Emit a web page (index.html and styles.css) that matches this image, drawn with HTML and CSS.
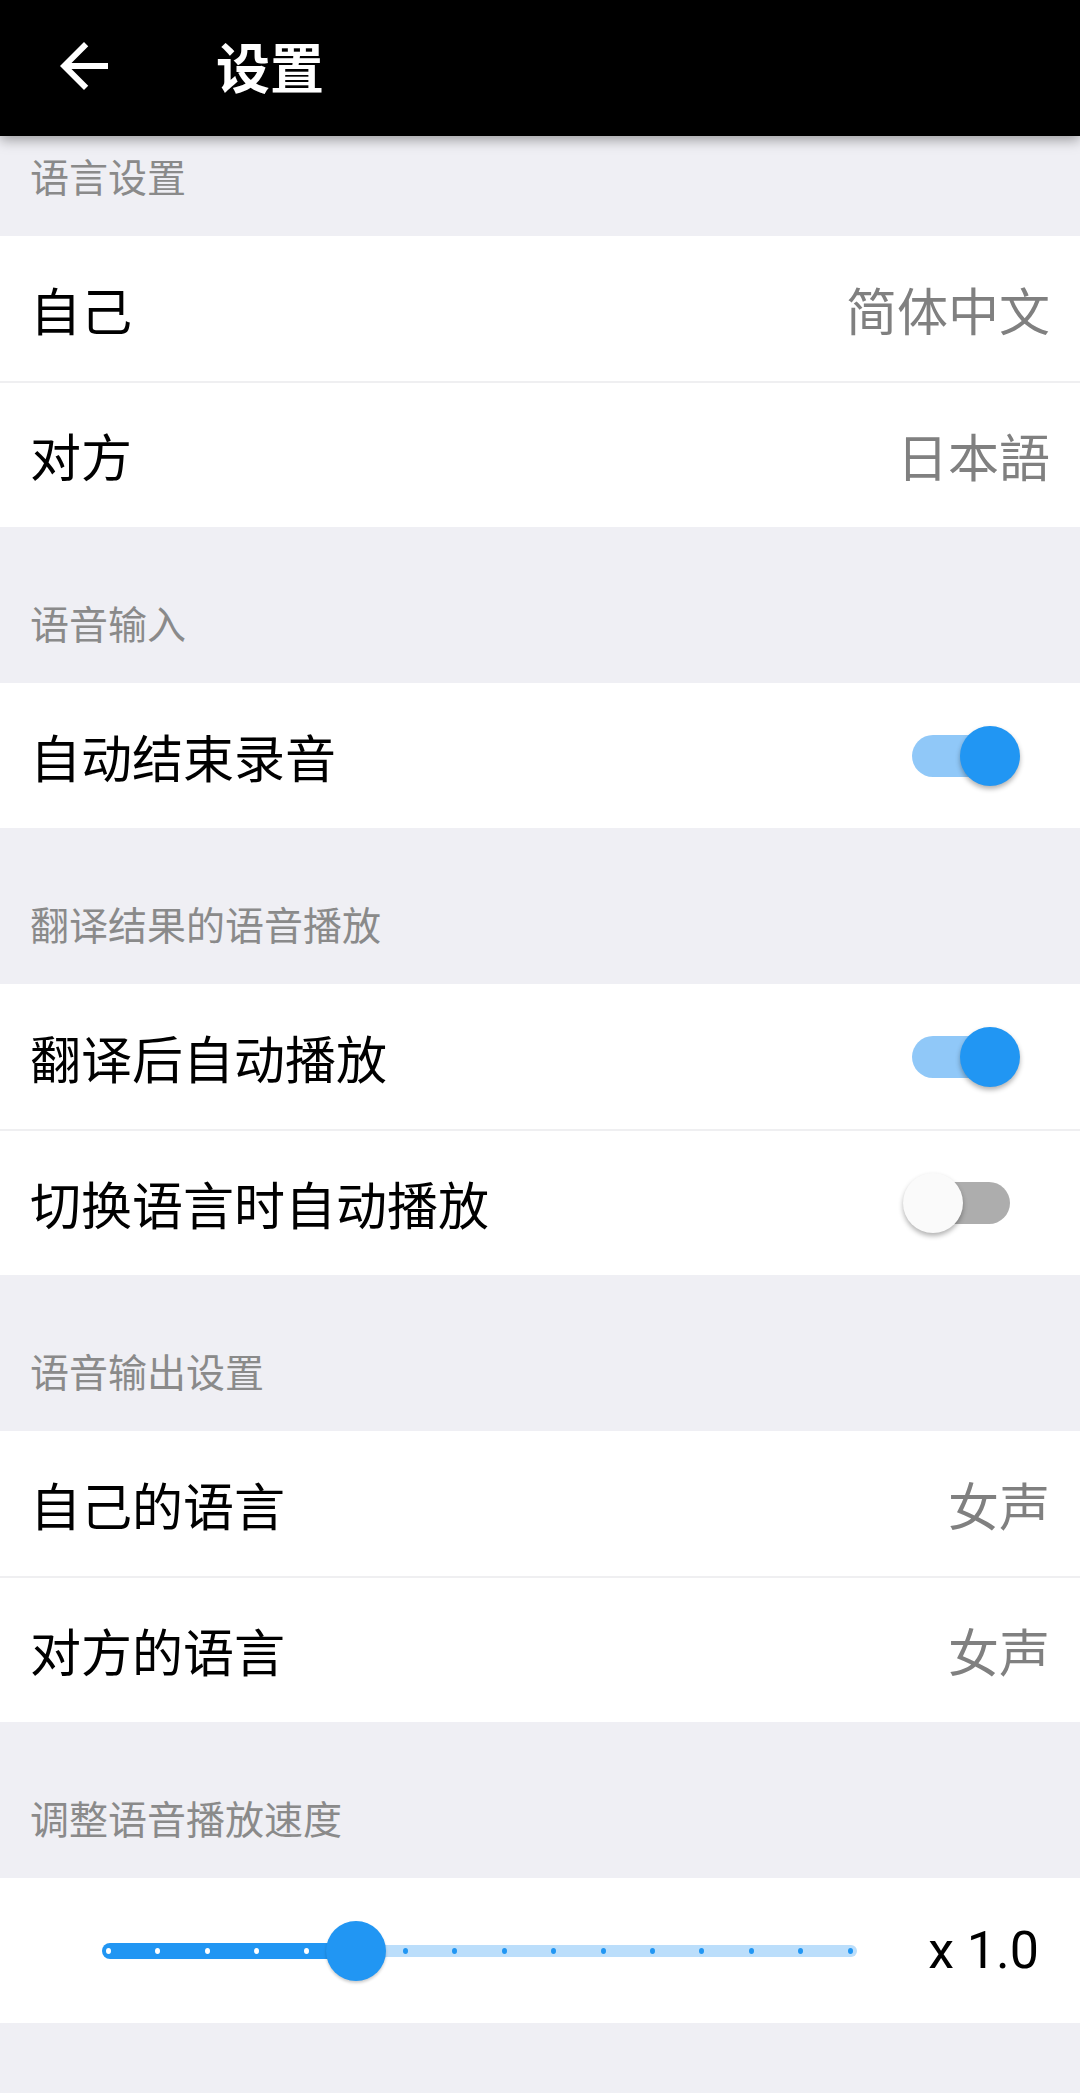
FILE: index.html
```html
<!DOCTYPE html>
<html lang="zh">
<head>
    <meta charset="UTF-8">
    <meta name="viewport" content="width=device-width, initial-scale=1.0">
    <title>设置</title>
    <link rel="stylesheet" href="styles.css">
</head>
<body>
    <div class="topbar">
        <svg class="back" viewBox="0 0 24 24" width="72" height="72">
            <path d="M20 11H7.83l5.59-5.59L12 4l-8 8 8 8 1.41-1.41L7.83 13H20v-2z" fill="#fff"/>
        </svg>
        <h1>设置</h1>
    </div>

    <div class="section first">
        <div class="section-title">语言设置</div>
        <div class="row">
            <span class="label">自己</span>
            <span class="value">简体中文</span>
        </div>
        <div class="row">
            <span class="label">对方</span>
            <span class="value">日本語</span>
        </div>
    </div>

    <div class="section">
        <div class="section-title">语音输入</div>
        <div class="row">
            <span class="label">自动结束录音</span>
            <div class="switch on"><div class="switch-track"></div><div class="switch-thumb"></div></div>
        </div>
    </div>

    <div class="section">
        <div class="section-title">翻译结果的语音播放</div>
        <div class="row">
            <span class="label">翻译后自动播放</span>
            <div class="switch on"><div class="switch-track"></div><div class="switch-thumb"></div></div>
        </div>
        <div class="row">
            <span class="label">切换语言时自动播放</span>
            <div class="switch"><div class="switch-track"></div><div class="switch-thumb"></div></div>
        </div>
    </div>

    <div class="section">
        <div class="section-title">语音输出设置</div>
        <div class="row">
            <span class="label">自己的语言</span>
            <span class="value">女声</span>
        </div>
        <div class="row">
            <span class="label">对方的语言</span>
            <span class="value">女声</span>
        </div>
    </div>

    <div class="section">
        <div class="section-title">调整语音播放速度</div>
        <div class="row slider-row">
            <div class="slider">
                <div class="track-active" style="width:254px"></div>
                <div class="track-rest"></div>
                <div class="ticks">
                    <span class="tick done"></span><span class="tick done"></span><span class="tick done"></span>
                    <span class="tick done"></span><span class="tick done"></span><span class="tick done"></span>
                    <span class="tick"></span><span class="tick"></span><span class="tick"></span>
                    <span class="tick"></span><span class="tick"></span><span class="tick"></span>
                    <span class="tick"></span><span class="tick"></span><span class="tick"></span>
                    <span class="tick"></span>
                </div>
                <div class="slider-thumb" style="left:224px"></div>
            </div>
            <span class="speed">x 1.0</span>
        </div>
    </div>
</body>
</html>
```

FILE: styles.css
```css
*{
    margin:0;
    padding:0;
    box-sizing:border-box;
}
body{
    background:#efeff4;
    font-family:"Noto Sans CJK SC","Noto Sans",sans-serif;
    width:1080px;
}
.topbar{
    position:relative;
    z-index:2;
    height:136px;
    background:#000;
    display:flex;
    align-items:center;
    padding-left:48px;
    padding-bottom:4px;
    box-shadow:0 4px 12px rgba(0,0,0,.35);
}
.topbar h1{
    color:#fff;
    font-size:54px;
    font-weight:700;
    margin-left:96px;
    line-height:1;
}
.section{
    margin-top:56px;
}
.section.first{
    margin-top:0;
}
.section-title{
    height:100px;
    padding:18px 0 0 30px;
    font-size:39px;
    line-height:42px;
    color:#8a8a8a;
}
.row{
    height:145px;
    background:#fff;
    display:flex;
    align-items:center;
    justify-content:space-between;
    padding:0 30px 0 30px;
}
.row + .row{
    height:146px;
    border-top:2px solid #efeff1;
}
.label{
    font-size:51px;
    color:#000;
}
.value{
    font-size:51px;
    color:#808080;
}
.switch{
    position:relative;
    width:117px;
    height:60px;
    margin-right:30px;
    display:flex;
    align-items:center;
}
.switch-track{
    margin-left:9px;
    width:98px;
    height:42px;
    border-radius:21px;
    background:#adadad;
}
.switch-thumb{
    position:absolute;
    top:0;
    left:0;
    width:60px;
    height:60px;
    border-radius:50%;
    background:#fafafa;
    box-shadow:0 3px 5px rgba(0,0,0,.3);
}
.switch.on .switch-track{
    background:#90c8f8;
}
.switch.on .switch-thumb{
    left:57px;
    background:#2196f3;
}
.slider-row{
    padding-left:102px;
    padding-right:41px;
}
.slider{
    position:relative;
    width:755px;
    height:16px;
    display:flex;
    align-items:center;
}
.track-active{
    height:16px;
    background:#2196f3;
    border-radius:8px 0 0 8px;
}
.track-rest{
    flex:1;
    height:12px;
    background:#bbdefb;
    border-radius:0 6px 6px 0;
}
.ticks{
    position:absolute;
    left:0;
    right:0;
    top:5px;
    padding:0 4px;
    display:flex;
    justify-content:space-between;
}
.tick{
    width:5px;
    height:6px;
    border-radius:50%;
    background:#2196f3;
}
.tick.done{
    background:#fff;
}
.slider-thumb{
    position:absolute;
    top:-22px;
    width:60px;
    height:60px;
    border-radius:50%;
    background:#2196f3;
    box-shadow:0 2px 3px rgba(0,0,0,.2);
}
.speed{
    font-family:Roboto,"Liberation Sans",sans-serif;
    font-size:52px;
    color:#000;
}
```
